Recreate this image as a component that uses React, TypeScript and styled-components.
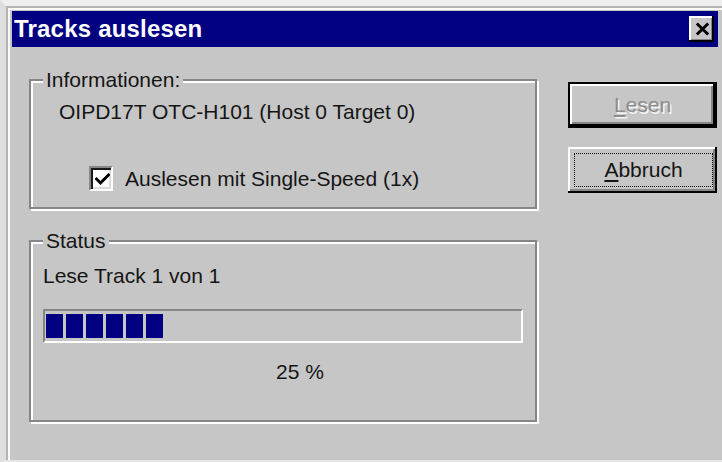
import React from "react";
import styled, { createGlobalStyle } from "styled-components";

const GlobalStyle = createGlobalStyle`
  html, body {
    margin: 0;
    padding: 0;
    background: #c6c6c6;
  }
  body {
    font-family: "Liberation Sans", Arial, sans-serif;
    -webkit-font-smoothing: antialiased;
  }
`;

const FACE = "#c6c6c6";
const SHADOW = "#868686";
const NAVY = "#000080";

const Window = styled.div`
  box-sizing: border-box;
  width: 722px;
  height: 462px;
  background: ${FACE};
  border-top: 6px solid #efefef;
  border-left: 6px solid #dedede;
  border-bottom: 2px solid #e6e6e6;
  box-shadow: inset 2px 2px 0 #b4b4b4, inset 4px 4px 0 #fafafa;
  padding: 5px 4px 0 6px;
  display: flex;
  flex-direction: column;
  overflow: hidden;
`;

const TitleBar = styled.div`
  flex-shrink: 0;
  height: 36px;
  background: ${NAVY};
  display: flex;
  align-items: center;
  justify-content: space-between;
  padding: 0 4px 0 2px;
`;

const TitleText = styled.span`
  color: #ffffff;
  font-weight: 700;
  font-size: 24px;
  line-height: 28px;
  letter-spacing: 0.2px;
`;

const CloseButton = styled.button`
  width: 25px;
  height: 26px;
  padding: 0 0 1px 2px;
  border: 0;
  background: ${FACE};
  box-shadow: inset -2px -2px 0 #000, inset 2px 2px 0 #fff,
    inset -3px -3px 0 ${SHADOW};
  display: flex;
  align-items: center;
  justify-content: center;
`;

const Content = styled.div`
  display: flex;
  align-items: flex-start;
  padding-left: 17px;
`;

const LeftColumn = styled.div`
  width: 508px;
  margin-top: 32px;
  display: flex;
  flex-direction: column;
  gap: 31px;
`;

const Group = styled.section<{ $height: number }>`
  box-sizing: border-box;
  height: ${(p) => p.$height}px;
  border: 2px solid ${SHADOW};
  box-shadow: inset 2px 2px 0 #fff, 2px 2px 0 #fff;
  display: flex;
  flex-direction: column;
  font-size: 21px;
  line-height: 24px;
  color: #151515;
`;

const GroupLabel = styled.span`
  align-self: flex-start;
  margin: -13px 0 0 12px;
  padding: 0 3px;
  background: ${FACE};
`;

const TextLine = styled.div<{ $top: number; $indent: number }>`
  margin-top: ${(p) => p.$top}px;
  padding-left: ${(p) => p.$indent}px;
  white-space: nowrap;
`;

const CheckRow = styled.label`
  margin-top: 42px;
  padding-left: 58px;
  display: flex;
  align-items: center;
  gap: 12px;
  height: 25px;
  white-space: nowrap;
`;

const CheckBox = styled.span`
  box-sizing: border-box;
  width: 24px;
  height: 25px;
  background: #fff;
  border: 2px solid;
  border-color: ${SHADOW} #fff #fff ${SHADOW};
  box-shadow: inset 2px 2px 0 #1a1a1a, inset -2px -2px 0 #dcdcdc;
  display: flex;
  align-items: center;
  justify-content: center;
  padding: 2px 0 0 2px;
`;

const ProgressTrack = styled.div`
  box-sizing: border-box;
  margin: 21px 0 0 12px;
  width: 480px;
  height: 34px;
  border: 2px solid;
  border-color: ${SHADOW} #fff #fff ${SHADOW};
  padding: 3px 2px 3px 1px;
  display: flex;
  gap: 3px;
`;

const ProgressBlock = styled.span`
  width: 17px;
  height: 24px;
  background: ${NAVY};
`;

const RightColumn = styled.div`
  margin: 35px 0 0 31px;
  display: flex;
  flex-direction: column;
  gap: 19px;
`;

const PushButton = styled.button<{ $default?: boolean }>`
  box-sizing: border-box;
  width: 149px;
  height: 46px;
  background: ${FACE};
  font-family: "Liberation Sans", Arial, sans-serif;
  font-size: 21px;
  line-height: 24px;
  color: #151515;
  display: flex;
  align-items: stretch;
  justify-content: center;
  border: ${(p) => (p.$default ? "2px solid #000" : "0")};
  padding: ${(p) => (p.$default ? "0" : "6px 4px 6px 6px")};
  box-shadow: inset -2px -2px 0 #000, inset 2px 2px 0 #fff,
    inset -4px -4px 0 ${SHADOW};

  &:disabled {
    color: #8c8c8c;
    text-shadow: 1.5px 1.5px 0 #f6f6f6;
  }
`;

const ButtonCaption = styled.span<{ $focused?: boolean }>`
  flex: 1;
  display: flex;
  align-items: center;
  justify-content: center;
  border: ${(p) => (p.$focused ? "1px dotted #000" : "0")};
`;

const Mnemonic = styled.span`
  text-decoration: underline;
  text-decoration-thickness: 1.5px;
  text-underline-offset: 3px;
`;

const CloseGlyph = () => (
  <svg width="15" height="14" viewBox="0 0 15 14">
    <path
      d="M1.8 1.5 L13.2 12.5 M13.2 1.5 L1.8 12.5"
      stroke="#000"
      strokeWidth="3"
      fill="none"
    />
  </svg>
);

const CheckGlyph = () => (
  <svg width="15" height="13" viewBox="0 0 15 13">
    <path
      d="M1.5 6 L5.5 10 L13.5 2"
      stroke="#000"
      strokeWidth="3"
      strokeLinecap="square"
      fill="none"
    />
  </svg>
);

const percent = 25;
const trackInner = 476;
const blockStep = 20;
const blockCount = Math.ceil((trackInner * percent) / 100 / blockStep);

export default function App() {
  return (
    <>
      <GlobalStyle />
      <Window>
        <TitleBar>
          <TitleText>Tracks auslesen</TitleText>
          <CloseButton aria-label="Schließen">
            <CloseGlyph />
          </CloseButton>
        </TitleBar>
        <Content>
          <LeftColumn>
            <Group $height={130}>
              <GroupLabel>Informationen:</GroupLabel>
              <TextLine $top={8} $indent={28}>
                OIPD17T OTC-H101 (Host 0 Target 0)
              </TextLine>
              <CheckRow>
                <CheckBox>
                  <CheckGlyph />
                </CheckBox>
                Auslesen mit Single-Speed (1x)
              </CheckRow>
            </Group>
            <Group $height={182}>
              <GroupLabel>Status</GroupLabel>
              <TextLine $top={11} $indent={12}>
                Lese Track 1 von 1
              </TextLine>
              <ProgressTrack>
                {Array.from({ length: blockCount }, (_, i) => (
                  <ProgressBlock key={i} />
                ))}
              </ProgressTrack>
              <TextLine $top={17} $indent={245}>
                {percent} %
              </TextLine>
            </Group>
          </LeftColumn>
          <RightColumn>
            <PushButton $default disabled>
              <ButtonCaption>
                <Mnemonic>L</Mnemonic>esen
              </ButtonCaption>
            </PushButton>
            <PushButton>
              <ButtonCaption $focused>
                <Mnemonic>A</Mnemonic>bbruch
              </ButtonCaption>
            </PushButton>
          </RightColumn>
        </Content>
      </Window>
    </>
  );
}
